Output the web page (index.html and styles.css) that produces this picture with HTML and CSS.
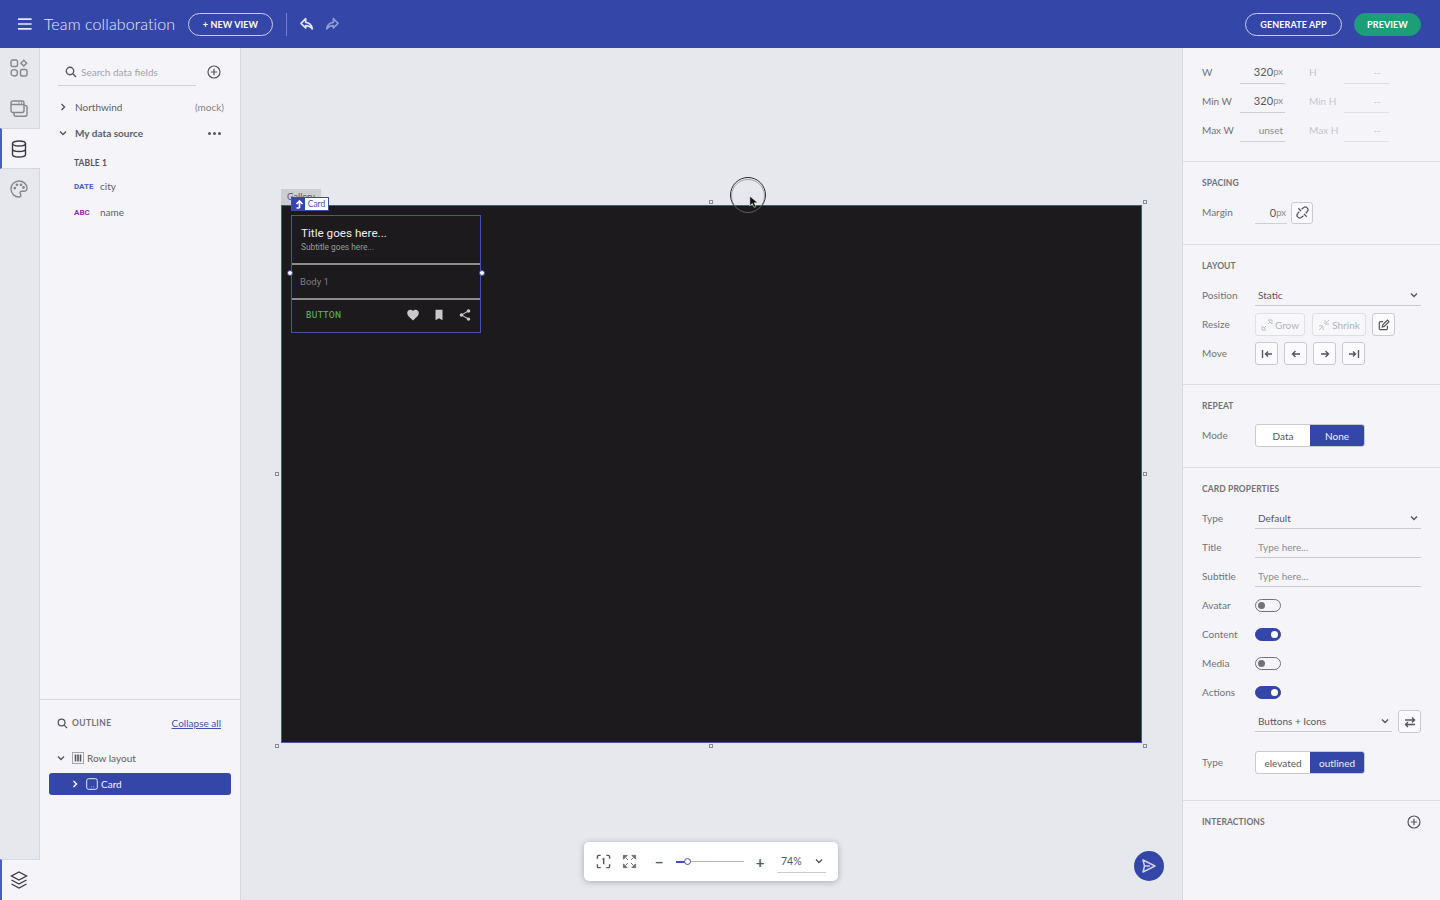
FILE: index.html
```html
<!DOCTYPE html>
<html lang="en">
<head>
<meta charset="utf-8">
<title>Team collaboration</title>
<link rel="stylesheet" href="styles.css">
</head>
<body>
<div class="app">
  <header class="topbar">
    <svg class="ic-menu" viewBox="0 0 14 12"><path d="M0 1.2h13.6M0 6h13.6M0 10.8h13.6"/></svg>
    <h1 class="app-title">Team collaboration</h1>
    <button class="pill pill-new">+ NEW VIEW</button>
    <span class="top-divider"></span>
    <svg class="ic-history" viewBox="0 -1 24 24"><path d="M10 6.5V3L3 10l7 7v-3.6c4.500 0 7.500 1.300 10 5-.8-5.200-3.800-9.300-10-9.900z"/></svg>
    <svg class="ic-history ic-dim" viewBox="0 -1 24 24"><path d="M14 6.500V3l7 7-7 7v-3.600c-4.500 0-7.500 1.300-10 5 .8-5.200 3.800-9.300 10-9.900z"/></svg>
    <span class="top-spacer"></span>
    <button class="pill pill-generate">GENERATE APP</button>
    <button class="pill pill-preview">PREVIEW</button>
  </header>

  <div class="main">
    <nav class="rail">
      <div class="rail-tab">
        <svg class="ic-rail" viewBox="0 0 18 18"><rect x="1" y="1" width="6.500" height="6.500" rx="1.500"/><path d="M13.800 1.300l2.900 2.900-2.900 2.900-2.900-2.900z"/><circle cx="4.200" cy="13.800" r="3.200"/><rect x="10.500" y="10.500" width="6.500" height="6.500" rx="1.500"/></svg>
      </div>
      <div class="rail-tab">
        <svg class="ic-rail" viewBox="0 -1 18 18"><rect x="1" y="1" width="13" height="11.500" rx="2"/><path d="M1 4.500h13M8.500 2.800h.8M11 2.800h.8M14 5.500h1.200a1.800 1.800 0 0 1 1.800 1.800v7a2 2 0 0 1-2 2H6a2 2 0 0 1-2-2v-1.800"/></svg>
      </div>
      <div class="rail-tab rail-tab-active">
        <svg class="ic-rail" viewBox="0 0 18 18"><ellipse cx="9" cy="3.500" rx="6.500" ry="2.500"/><path d="M2.500 3.500v11c0 1.400 2.900 2.500 6.500 2.500s6.500-1.100 6.500-2.500v-11M2.500 9c0 1.400 2.900 2.500 6.500 2.500s6.500-1.100 6.500-2.500"/></svg>
      </div>
      <div class="rail-tab">
        <svg class="ic-rail" viewBox="0 0 18 18"><path d="M9 1a8 8 0 0 0 0 16c1.200 0 1.900-.8 1.900-1.700 0-1.200-.9-1.500-.9-2.500 0-.9.7-1.500 1.700-1.500H14a3 3 0 0 0 3-3C17 4.200 13.500 1 9 1z"/><circle cx="4.800" cy="8.200" r=".7"/><circle cx="7" cy="4.800" r=".7"/><circle cx="11" cy="4.800" r=".7"/><circle cx="13.500" cy="7.500" r=".7"/></svg>
      </div>
      <div class="rail-fill"></div>
      <div class="rail-tab rail-tab-active rail-tab-last">
        <svg class="ic-rail" viewBox="0 0 18 18"><path d="M9 1l7.500 4L9 9 1.500 5zM1.500 9L9 13l7.500-4M1.500 13L9 17l7.500-4"/></svg>
      </div>
    </nav>

    <aside class="data-panel">
      <div class="data-top">
        <div class="search-row">
          <div class="search-box">
            <svg class="ic-search" viewBox="0 0 12 12"><circle cx="5" cy="5" r="3.700"/><path d="M7.800 7.800l3.200 3.200"/></svg>
            <span class="search-text">Search data fields</span>
          </div>
          <svg class="ic-plus" viewBox="0 0 14 14"><circle cx="7" cy="7" r="6"/><path d="M7 3.800v6.400M3.800 7h6.400"/></svg>
        </div>
        <div class="tree-row">
          <svg class="ic-chev" viewBox="0 0 8 8"><path d="M2.500 1l3 3-3 3"/></svg>
          <span class="tree-name">Northwind</span>
          <span class="tree-note">(mock)</span>
        </div>
        <div class="tree-row">
          <svg class="ic-chev" viewBox="0 0 8 8"><path d="M1 2.500l3 3 3-3"/></svg>
          <span class="tree-name tree-strong">My data source</span>
          <span class="tree-dots"><i></i><i></i><i></i></span>
        </div>
        <div class="table-name">TABLE 1</div>
        <div class="field-row"><span class="field-type type-date">DATE</span><span class="field-name">city</span></div>
        <div class="field-row"><span class="field-type type-abc">ABC</span><span class="field-name">name</span></div>
      </div>
      <div class="outline">
        <div class="outline-head">
          <svg class="ic-search ic-search-sm" viewBox="0 0 12 12"><circle cx="5" cy="5" r="3.700"/><path d="M7.800 7.800l3.200 3.200"/></svg>
          <span class="outline-title">OUTLINE</span>
          <a class="outline-link">Collapse all</a>
        </div>
        <div class="outline-row">
          <svg class="ic-chev" viewBox="0 0 8 8"><path d="M1 2.500l3 3 3-3"/></svg>
          <svg class="ic-node" viewBox="0 0 12 12"><rect x=".5" y=".5" width="11" height="11" class="dash"/><path class="bars" d="M3.500 2.500v7M6 2.500v7M8.500 2.500v7"/></svg>
          <span>Row layout</span>
        </div>
        <div class="outline-row outline-row-active">
          <svg class="ic-chev" viewBox="0 0 8 8"><path d="M2.500 1l3 3-3 3"/></svg>
          <svg class="ic-node-card" viewBox="0 0 12 12"><rect x=".7" y=".7" width="10.600" height="10.600" rx="2"/><path d="M5 8.800h.6M7.300 8.800h.6"/></svg>
          <span>Card</span>
        </div>
      </div>
    </aside>

    <section class="canvas">
      <div class="tag-gallery">Gallery</div>
      <div class="gallery">
        <article class="card">
          <div class="card-head">
            <div class="card-title">Title goes here...</div>
            <div class="card-sub">Subtitle goes here...</div>
          </div>
          <div class="card-body">Body 1</div>
          <div class="card-actions">
            <span class="card-btn">BUTTON</span>
            <svg class="ic-card" viewBox="0 0 24 24"><path d="M12 21.350l-1.450-1.320C5.400 15.360 2 12.280 2 8.500 2 5.420 4.420 3 7.500 3c1.740 0 3.410.81 4.500 2.090C13.090 3.810 14.760 3 16.500 3 19.580 3 22 5.420 22 8.500c0 3.780-3.400 6.860-8.550 11.540L12 21.350z"/></svg>
            <svg class="ic-card" viewBox="0 0 24 24"><path d="M6 3h12v18l-6-3.500L6 21z"/></svg>
            <svg class="ic-card" viewBox="0 0 24 24"><path d="M18 16.080c-.76 0-1.440.3-1.960.77L8.910 12.700c.05-.23.09-.46.09-.7s-.04-.47-.09-.7l7.050-4.110c.54.5 1.250.81 2.040.81 1.660 0 3-1.340 3-3s-1.340-3-3-3-3 1.340-3 3c0 .24.04.47.09.7L8.040 9.810C7.500 9.310 6.790 9 6 9c-1.660 0-3 1.340-3 3s1.340 3 3 3c.79 0 1.500-.31 2.040-.81l7.120 4.160c-.05.21-.08.43-.08.65 0 1.610 1.310 2.920 2.920 2.920 1.610 0 2.920-1.310 2.920-2.920s-1.310-2.920-2.920-2.920z"/></svg>
          </div>
          <i class="card-dot card-dot-l"></i>
          <i class="card-dot card-dot-r"></i>
        </article>
      </div>
      <div class="tag-card">
        <span class="tag-arrow"><svg viewBox="0 0 10 10"><path d="M5.500 9V2M2.500 5l3-3 3 3M2.500 9h3"/></svg></span>
        <span class="tag-text">Card</span>
      </div>
      <i class="handle h1"></i><i class="handle h2"></i><i class="handle h3"></i><i class="handle h4"></i><i class="handle h5"></i><i class="handle h6"></i><i class="handle h7"></i>

      <div class="cursor-ring"></div>
      <div class="cursor-ring2"></div>
      <svg class="cursor-arrow" viewBox="0 0 12 16"><path d="M1 1v11.500l3-2.700 2 4.700 2.200-1-2-4.500h4.300z"/></svg>

      <div class="zoom-bar">
        <svg class="ic-zoom" viewBox="0 0 16 16"><path d="M1.500 5V2.800c0-.7.600-1.300 1.300-1.300H5M11 1.500h2.200c.7 0 1.300.6 1.300 1.300V5M14.500 11v2.200c0 .7-.6 1.300-1.300 1.300H11M5 14.500H2.800c-.7 0-1.300-.6-1.300-1.300V11M7 6l1.200-1v6"/></svg>
        <svg class="ic-zoom ic-zoom-fill" viewBox="0 0 16 16"><path d="M1.500 5.500v-4h4zM10.500 1.500h4v4zM14.500 10.500v4h-4zM5.500 14.500h-4v-4zM4 4l2.500 2.500M12 4L9.500 6.500M12 12L9.500 9.500M4 12l2.500-2.500"/></svg>
        <span class="zoom-sign">−</span>
        <div class="slider"><span class="slider-fill"></span><span class="slider-knob"></span></div>
        <span class="zoom-sign">+</span>
        <div class="zoom-value"><span>74%</span><svg class="ic-chev" viewBox="0 0 8 8"><path d="M1 2.500l3 3 3-3"/></svg></div>
      </div>

      <button class="fab"><svg viewBox="0 0 16 16"><path d="M2 2l12 6-12 6 1.500-6zM3.500 8H9"/></svg></button>
    </section>

    <aside class="props">
      <section class="prop-section sec-size">
        <div class="size-row">
          <span class="size-label">W</span><span class="size-input"><b>320</b><small>px</small></span>
          <span class="size-label2">H</span><span class="size-input size-off">--</span>
        </div>
        <div class="size-row">
          <span class="size-label">Min W</span><span class="size-input"><b>320</b><small>px</small></span>
          <span class="size-label2">Min H</span><span class="size-input size-off">--</span>
        </div>
        <div class="size-row">
          <span class="size-label">Max W</span><span class="size-input size-unset">unset</span>
          <span class="size-label2">Max H</span><span class="size-input size-off">--</span>
        </div>
      </section>

      <section class="prop-section">
        <h2 class="sec-title">SPACING</h2>
        <div class="prop-row">
          <span class="prop-label">Margin</span>
          <span class="margin-input"><b>0</b><small>px</small></span>
          <button class="icon-btn icon-btn-tight"><svg viewBox="0 0 14 14"><path d="M6 3.500L8 2a2.700 2.700 0 0 1 4 4l-1.500 2M8 10.500L6 12a2.700 2.700 0 0 1-4-4l1.500-2M2.500 2.500L5.500 5.500M11.500 11.500L8.500 8.500"/></svg></button>
        </div>
      </section>

      <section class="prop-section sec-layout">
        <h2 class="sec-title">LAYOUT</h2>
        <div class="prop-row">
          <span class="prop-label">Position</span>
          <div class="select select-full"><span>Static</span><svg class="ic-chev" viewBox="0 0 8 8"><path d="M1 2.500l3 3 3-3"/></svg></div>
        </div>
        <div class="prop-row">
          <span class="prop-label">Resize</span>
          <div class="btn-group">
            <button class="text-btn text-btn-grow"><svg viewBox="0 0 12 12"><path d="M7 1h4v4L7 1zM5 11H1V7l4 4zM9 3L7 5M3 9l2-2"/></svg>Grow</button>
            <button class="text-btn text-btn-shrink"><svg viewBox="0 0 12 12"><path d="M11 1L8 4M7 1v4h4M1 11l3-3M1 7h4v4"/></svg>Shrink</button>
            <button class="icon-btn"><svg viewBox="0 0 14 14"><path d="M11 8v3a1.500 1.500 0 0 1-1.500 1.500H3A1.500 1.500 0 0 1 1.500 11V4.500A1.500 1.500 0 0 1 3 3h3"/><path d="M5 9.200l.5-2.400L11 1.300l1.800 1.800-5.500 5.500z"/></svg></button>
          </div>
        </div>
        <div class="prop-row">
          <span class="prop-label">Move</span>
          <div class="btn-group">
            <button class="icon-btn"><svg viewBox="0 0 12 12"><path d="M1.500 2v8M11 6H4.500M7 3.500L4.500 6 7 8.500"/></svg></button>
            <button class="icon-btn"><svg viewBox="0 0 12 12"><path d="M10 6H2.500M5.500 3L2.500 6l3 3"/></svg></button>
            <button class="icon-btn"><svg viewBox="0 0 12 12"><path d="M2 6h7.500M6.500 3l3 3-3 3"/></svg></button>
            <button class="icon-btn"><svg viewBox="0 0 12 12"><path d="M10.500 2v8M1 6h6.500M5 3.500L7.500 6 5 8.500"/></svg></button>
          </div>
        </div>
      </section>

      <section class="prop-section">
        <h2 class="sec-title">REPEAT</h2>
        <div class="prop-row">
          <span class="prop-label">Mode</span>
          <div class="segment"><span class="seg">Data</span><span class="seg seg-on">None</span></div>
        </div>
      </section>

      <section class="prop-section sec-card">
        <h2 class="sec-title">CARD PROPERTIES</h2>
        <div class="prop-row">
          <span class="prop-label">Type</span>
          <div class="select select-full"><span>Default</span><svg class="ic-chev" viewBox="0 0 8 8"><path d="M1 2.500l3 3 3-3"/></svg></div>
        </div>
        <div class="prop-row">
          <span class="prop-label">Title</span>
          <div class="select select-full select-ph"><span>Type here...</span></div>
        </div>
        <div class="prop-row">
          <span class="prop-label">Subtitle</span>
          <div class="select select-full select-ph"><span>Type here...</span></div>
        </div>
        <div class="prop-row"><span class="prop-label">Avatar</span><span class="toggle"></span></div>
        <div class="prop-row"><span class="prop-label">Content</span><span class="toggle toggle-on"></span></div>
        <div class="prop-row"><span class="prop-label">Media</span><span class="toggle"></span></div>
        <div class="prop-row"><span class="prop-label">Actions</span><span class="toggle toggle-on"></span></div>
        <div class="prop-row">
          <span class="prop-label"></span>
          <div class="select select-short"><span>Buttons + Icons</span><svg class="ic-chev" viewBox="0 0 8 8"><path d="M1 2.500l3 3 3-3"/></svg></div>
          <button class="icon-btn icon-btn-swap"><svg viewBox="0 0 12 12"><path d="M1 4h9.500M8 1.500L10.500 4 8 6.500M11 8.500H1.500M4 6L1.500 8.500 4 11"/></svg></button>
        </div>
        <div class="prop-row prop-row-gap">
          <span class="prop-label">Type</span>
          <div class="segment"><span class="seg">elevated</span><span class="seg seg-on">outlined</span></div>
        </div>
      </section>

      <section class="prop-section sec-last">
        <h2 class="sec-title">INTERACTIONS</h2>
        <svg class="ic-plus" viewBox="0 0 14 14"><circle cx="7" cy="7" r="6"/><path d="M7 3.800v6.400M3.800 7h6.400"/></svg>
      </section>
    </aside>
  </div>
</div>
</body>
</html>
```
FILE: styles.css
```css
* { box-sizing: border-box; }
html, body { margin: 0; height: 100%; }
body { font-family: "Lato", "Noto Sans", sans-serif; color: #55565f; background: #f5f5f9; overflow: hidden; }
button { font-family: inherit; padding: 0; margin: 0; cursor: default; }
svg { display: block; flex: none; fill: none; }
.app { height: 900px; display: flex; flex-direction: column; }

/* top bar */
.topbar { height: 48px; flex: none; background: #3546a9; display: flex; align-items: center; padding: 0 19px 0 18px; color: #fff; }
.ic-menu { width: 14px; height: 12px; stroke: #e6e8f6; stroke-width: 1.700; margin-right: 12px; }
.app-title { margin: 0 0 2px; font-weight: 300; font-size: 16px; color: #e9ebf8; width: 144px; white-space: nowrap; letter-spacing: .1px; }
.pill { height: 23px; border-radius: 12px; font-size: 9px; font-weight: 700; color: #fff; background: transparent; border: 1.500px solid #c9cdea; letter-spacing: .1px; }
.pill-new { width: 85px; }
.pill-generate { width: 97px; }
.pill-preview { width: 67px; margin-left: 12px; background: #1c9f78; border-color: #1c9f78; }
.top-divider { width: 1px; height: 23px; background: #7481c6; margin: 0 12px 0 13px; }
.ic-history { width: 16px; height: 16px; stroke: #e3e6f6; stroke-width: 2.500; stroke-linejoin: round; margin-right: 9px; }
.ic-dim { stroke: #8f9ad4; }
.top-spacer { flex: 1; }

/* layout */
.main { flex: 1; display: flex; min-height: 0; }
.rail { width: 40px; flex: none; display: flex; flex-direction: column; background: #e6e8ee; }
.rail-tab { height: 40px; flex: none; display: flex; align-items: center; justify-content: center; border-right: 1px solid #d6d8df; padding-right: 1px; }
.rail-tab-active { height: 41px; background: #f5f5f9; border-left: 2px solid #4d5cc4; border-right: 0; border-top: 1px solid #d6d8df; border-bottom: 1px solid #d6d8df; padding-right: 4px; }
.rail-tab-last { border-bottom: 0; }
.rail-fill { flex: 1; border-right: 1px solid #d6d8df; }
.ic-rail { width: 18px; height: 18px; stroke: #85868e; stroke-width: 1.400; }
.rail-tab-active .ic-rail { stroke: #3a3b45; stroke-width: 1.400; }

/* data panel */
.data-panel { width: 201px; flex: none; display: flex; flex-direction: column; background: #f5f5f9; border-right: 1px solid #d6d8df; }
.data-top { flex: 1; padding: 10px 16px 0 18px; }
.search-row { display: flex; align-items: center; height: 28px; }
.search-box { width: 138px; height: 26px; border-bottom: 1px solid #cfd0d6; display: flex; align-items: center; padding: 0 0 0 7px; margin-top: 1px; }
.ic-search { width: 12px; height: 12px; stroke: #55565f; stroke-width: 1.400; margin-right: 4px; }
.search-text { font-size: 10px; color: #a2a3aa; white-space: nowrap; }
.ic-plus { width: 14px; height: 14px; stroke: #55565f; stroke-width: 1.200; margin-left: 11px; }
.tree-row { height: 26px; display: flex; align-items: center; font-size: 10px; }
.search-row + .tree-row { margin-top: 8px; }
.ic-chev { width: 8px; height: 8px; stroke: #55565f; stroke-width: 1.400; margin: 0 8px 0 1px; }
.tree-name { color: #5c5d66; flex: 1; }
.tree-strong { font-weight: 700; }
.tree-note { color: #80818a; }
.tree-dots { display: flex; gap: 2px; margin-right: 3px; }
.tree-dots i { width: 3px; height: 3px; border-radius: 50%; background: #55565f; }
.table-name { margin: 8px 0 0 16px; height: 18px; line-height: 18px; font-size: 8.500px; font-weight: 700; color: #55565f; letter-spacing: .1px; }
.field-row { height: 26px; display: flex; align-items: center; padding-left: 16px; }
.table-name + .field-row { margin-top: 1px; }
.field-type { width: 26px; font-family: "Roboto", sans-serif; font-weight: 700; font-size: 8px; }
.type-date { color: #4a5ac8; }
.type-abc { color: #8a2fa8; }
.field-name { font-size: 10px; color: #5c5d66; }

.outline { height: 201px; flex: none; border-top: 1px solid #d9dae0; padding: 0 9px; }
.outline-head { height: 44px; display: flex; align-items: center; padding: 2px 10px 0 8px; }
.ic-search-sm { width: 11px; height: 11px; margin-right: 4px; }
.outline-title { flex: 1; font-size: 8.500px; font-weight: 700; letter-spacing: .4px; color: #707179; }
.outline-link { font-size: 10px; color: #4352b0; text-decoration: underline; }
.outline-row { height: 23px; display: flex; align-items: center; font-size: 10px; color: #5c5d66; padding-left: 6px; }
.outline-head + .outline-row { margin-top: 2px; margin-bottom: 4px; }
.outline-row .ic-chev { margin: 0 7px 0 2px; }
.ic-node { width: 12px; height: 12px; margin-right: 3px; }
.dash { stroke: #55565f; stroke-dasharray: 1 1; }
.bars { stroke: #55565f; stroke-width: 1.600; }
.outline-row-active { height: 22px; background: #3546a9; border-radius: 3px; color: #f2f3fb; padding-left: 20px; }
.outline-row-active .ic-chev { stroke: #fff; }
.ic-node-card { width: 12px; height: 12px; stroke: #e6e8f6; margin-right: 3px; }

/* canvas */
.canvas { flex: 1; position: relative; background: #e6e8ee; }
.gallery { position: absolute; left: 40px; top: 157px; width: 861px; height: 538px; background: #1c1a1d; border: 1px solid #4553b0; }
.tag-gallery { position: absolute; left: 40px; top: 141px; width: 40px; height: 16px; background: #ccced2; font-size: 9px; line-height: 16px; text-align: center; color: #55565f; }
.tag-card { position: absolute; left: 50px; top: 149px; height: 14px; display: flex; border: 1px solid #3f4ca6; background: #fff; }
.tag-arrow { width: 13px; background: #3546a9; display: flex; align-items: center; justify-content: center; }
.tag-arrow svg { width: 10px; height: 10px; stroke: #fff; stroke-width: 1.700; }
.tag-text { width: 23px; font-size: 8.500px; line-height: 12px; text-align: center; color: #4352b0; }
.handle { position: absolute; width: 4px; height: 4px; background: #eceef2; border: 1px solid #8b8c94; }
.h1 { left: 34px; top: 424px; } .h2 { left: 468px; top: 152px; } .h3 { left: 902px; top: 152px; }
.h4 { left: 902px; top: 424px; } .h5 { left: 902px; top: 696px; } .h6 { left: 468px; top: 696px; }
.h7 { left: 34px; top: 696px; }

.card { position: relative; margin: 9px 0 0 9px; width: 190px; height: 118px; border: 1.500px solid #4553b0; display: flex; flex-direction: column; font-family: "Roboto", sans-serif; }
.card-head { height: 49px; padding: 8px 0 0 9px; border-bottom: 2px solid #8d8d8d; }
.card-title { font-size: 11.700px; color: #ededed; line-height: 18px; font-weight: 400; }
.card-sub { font-size: 8.300px; color: #9b9b9b; line-height: 11px; }
.card-body { height: 35px; padding: 0 0 2px 8px; font-size: 9.500px; line-height: 33px; color: #7f7f7f; border-bottom: 2px solid #8d8d8d; }
.card-actions { flex: 1; display: flex; align-items: center; padding: 0 8px 2px 14px; gap: 12px; }
.card-btn { flex: 1; font-size: 8.500px; letter-spacing: .4px; color: #5aa84f; font-weight: 500; }
.ic-card { width: 14px; height: 14px; fill: #c9c9c9; }
.card-dot { position: absolute; width: 6px; height: 6px; border-radius: 50%; background: #fff; border: 1px solid #3f4ca6; top: 54px; }
.card-dot-l { left: -5px; }
.card-dot-r { right: -5px; }

.cursor-ring { position: absolute; left: 489px; top: 129px; width: 36px; height: 36px; border-radius: 50%; border: 1.500px solid #2a2a2e; }
.cursor-ring2 { position: absolute; left: 490px; top: 131px; width: 34px; height: 34px; border-radius: 50%; border: 1px solid rgba(120,120,125,.6); }
.cursor-arrow { position: absolute; left: 508px; top: 147px; width: 10px; height: 14px; fill: #111; stroke: #fff; stroke-width: .6; }

.zoom-bar { position: absolute; left: 343px; top: 794px; width: 254px; height: 39px; background: #fff; border-radius: 5px; box-shadow: 0 1px 6px rgba(40,40,60,.32); display: flex; align-items: center; padding: 0 12px 0 12px; }
.ic-zoom { width: 15px; height: 15px; stroke: #55565f; stroke-width: 1.500; margin-right: 11px; }
.ic-zoom-fill { fill: #6d6e76; stroke: #6d6e76; stroke-width: 1; }
.zoom-sign { width: 16px; text-align: center; font-size: 15px; font-weight: 700; color: #55565f; line-height: 16px; }
.zoom-bar .ic-zoom + .zoom-sign { margin-left: 3px; }
.slider { position: relative; width: 68px; height: 1px; background: #b3b4bb; margin: 0 8px 0 9px; }
.slider-fill { position: absolute; left: 0; top: -.5px; width: 11px; height: 2px; background: #3f4fb5; }
.slider-knob { position: absolute; left: 8px; top: -3px; width: 7px; height: 7px; border-radius: 50%; background: #fff; border: 1.500px solid #3f4fb5; }
.zoom-value { width: 49px; height: 22px; border-bottom: 1px solid #c9cad0; display: flex; align-items: center; justify-content: space-between; margin-left: 9px; padding: 0 3px 0 4px; font-size: 10.500px; color: #55565f; }
.zoom-value .ic-chev { margin: 0; }

.fab { position: absolute; left: 893px; top: 803px; width: 30px; height: 30px; border-radius: 50%; border: 0; background: #3546a9; display: flex; align-items: center; justify-content: center; }
.fab svg { width: 16px; height: 16px; stroke: #cdd2ef; stroke-width: 1.500; stroke-linejoin: round; }

/* properties */
.props { width: 258px; flex: none; background: #f5f5f9; border-left: 1px solid #d6d8df; }
.prop-section { padding: 14px 19px 17px; border-bottom: 1px solid #dedfe5; }
.sec-size { padding: 9px 19px 17px; }
.sec-layout { padding-bottom: 16px; }
.sec-card { padding-bottom: 23px; }
.sec-title { margin: 0 0 7px; font-size: 8.500px; line-height: 15px; font-weight: 700; color: #707179; letter-spacing: .1px; }
.size-row { height: 29px; display: flex; align-items: center; font-size: 10px; }
.size-label { width: 38px; color: #707179; }
.size-label2 { width: 35px; margin-left: 24px; color: #c4c5cb; }
.size-input { width: 45px; height: 24px; border-bottom: 1px solid #cfd0d6; display: flex; align-items: center; justify-content: flex-end; padding: 1px 2px 0 0; }
.size-input b, .margin-input b { font-weight: 400; color: #55565f; font-size: 11px; letter-spacing: .1px; }
.size-input small, .margin-input small { font-size: 9.500px; color: #8a8b93; }
.size-off { color: #c4c5cb; border-color: #e0e1e6; padding-right: 8px; }
.size-unset { color: #8a8b93; }
.prop-row { height: 29px; display: flex; align-items: center; font-size: 10px; }
.prop-row-gap { margin-top: 12px; }
.prop-label { width: 53px; flex: none; color: #707179; padding-bottom: 2px; }
.margin-input { width: 32px; height: 22px; border-bottom: 1px solid #cfd0d6; display: flex; align-items: center; justify-content: flex-end; padding-right: 1px; }
.icon-btn { width: 23px; height: 23px; border: 1px solid #c9cad0; border-radius: 3px; background: #fbfbfd; display: flex; align-items: center; justify-content: center; }
.icon-btn svg { width: 12px; height: 12px; stroke: #55565f; stroke-width: 1.400; }
.icon-btn-tight { width: 22px; height: 22px; margin-left: 4px; }
.icon-btn-tight svg { width: 13px; height: 13px; }
.icon-btn-swap { margin-left: 6px; }
.btn-group { display: flex; gap: 6px; }
.text-btn { height: 23px; border: 1px solid #e0e1e6; border-radius: 3px; background: #f8f8fb; display: flex; align-items: center; justify-content: center; gap: 2px; font-size: 10px; color: #b2b3ba; }
.text-btn svg { width: 12px; height: 12px; stroke: #c0c1c8; }
.text-btn-grow { width: 50px; }
.text-btn-shrink { width: 54px; margin-left: 1px; }
.select { height: 21px; border-bottom: 1px solid #c9cad0; display: flex; align-items: center; justify-content: space-between; padding: 0 3px 0 3px; color: #55565f; font-size: 10px; }
.select .ic-chev { margin: 0; }
.select-full { width: 166px; }
.select-short { width: 137px; }
.select-ph { color: #8a8b93; }
.segment { width: 110px; height: 23px; display: flex; border: 1px solid #c9cad0; border-radius: 3px; background: #fff; overflow: hidden; font-size: 10px; }
.seg { flex: 1; text-align: center; line-height: 22px; color: #55565f; }
.seg-on { background: #3546a9; color: #eef0fa; }
.toggle { position: relative; width: 26px; height: 13px; border-radius: 7px; border: 1.500px solid #707179; }
.toggle::after { content: ""; position: absolute; left: 2px; top: 1.500px; width: 7px; height: 7px; border-radius: 50%; background: #707179; }
.toggle-on { background: #3546a9; border-color: #3546a9; }
.toggle-on::after { left: auto; right: 2px; background: #fff; }
.sec-last { display: flex; align-items: flex-start; justify-content: space-between; border-bottom: 0; padding-right: 19px; }
.sec-last .sec-title { margin: 0; }
```
